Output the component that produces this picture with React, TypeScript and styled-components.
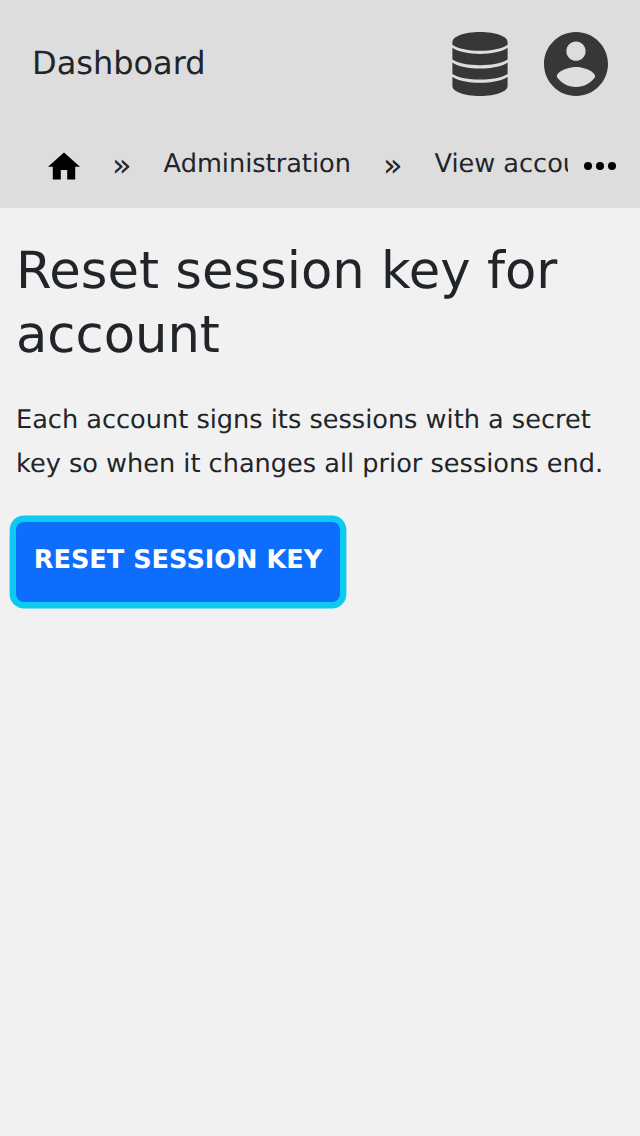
import React from 'react';
import styled, { createGlobalStyle } from 'styled-components';

const GlobalStyle = createGlobalStyle`
  * { box-sizing: border-box; }
  body {
    margin: 0;
    background: #f1f1f1;
    color: #212529;
    font-family: "DejaVu Sans", sans-serif;
    text-rendering: geometricPrecision;
  }
`;

const Page = styled.div`
  min-height: 1136px;
`;

const Header = styled.header`
  height: 208px;
  background: #ddd;
`;

const TopBar = styled.div`
  display: flex;
  align-items: center;
  height: 128px;
  padding: 0 32px;
`;

const Brand = styled.a`
  flex: 1;
  padding-bottom: 2px;
  font-size: 32px;
  line-height: 48px;
`;

const Actions = styled.div`
  display: flex;
  gap: 32px;
`;

const IconButton = styled.button`
  width: 64px;
  height: 64px;
  padding: 0;
  border: 0;
  background: none;
  color: #373737;
  svg { display: block; }
`;

const Crumbs = styled.nav`
  display: flex;
  height: 80px;
  padding-left: 48px;
`;

const CrumbList = styled.div`
  display: flex;
  width: 520px;
  overflow: hidden;
  white-space: nowrap;
`;

const Crumb = styled.span`
  font-size: 25.6px;
  line-height: 40px;
  padding-top: 16px;
  flex: none;
`;

const Separator = styled.span`
  flex: none;
  width: 83.6px;
  padding-top: 17px;
  text-align: center;
  font-size: 32px;
  line-height: 40px;
`;

const HomeIcon = styled.svg`
  flex: none;
  width: 32px;
  height: 28px;
  margin-top: 24px;
`;

const MoreIcon = styled.svg`
  flex: none;
  width: 32px;
  height: 8px;
  margin: 34px 0 0 16px;
`;

const Content = styled.main`
  padding: 31px 16px;
`;

const Title = styled.h1`
  margin: 0;
  font-size: 51.2px;
  font-weight: 400;
  line-height: 64px;
`;

const Description = styled.p`
  margin: 31px 0 36px;
  font-size: 25.6px;
  line-height: 44px;
`;

const PrimaryButton = styled.button`
  height: 80px;
  width: 324px;
  padding: 0 0 4px;
  border: 0;
  border-radius: 8px;
  background: #0d6efd;
  box-shadow: 0 0 0 6.4px #0dcaf0;
  color: #fff;
  font: 700 25.6px "DejaVu Sans", sans-serif;
  text-rendering: geometricPrecision;
  white-space: nowrap;
`;

export default function App() {
  return (
    <Page>
      <GlobalStyle />
      <Header>
        <TopBar>
          <Brand>Dashboard</Brand>
          <Actions>
            <IconButton aria-label="Data">
              <svg width="64" height="64" viewBox="0 0 64 64" fill="currentColor">
                <path d="M4.4 10C4.4 4.5 16 0 32 0S59.6 4.5 59.6 10V12.8C54 16.8 43 18.8 32 18.8S10 16.8 4.4 12.8Z" />
                <path d="M4.4 15.8C10 19.9 21 21.9 32 21.9S54 19.9 59.6 15.8V27.5C54 31.3 43 33.2 32 33.2S10 31.3 4.4 27.5Z" />
                <path d="M4.4 30.4C10 34.4 21 36.4 32 36.4S54 34.4 59.6 30.4V42C54 45.8 43 47.6 32 47.6S10 45.8 4.4 42Z" />
                <path d="M4.4 45C10 48.9 21 50.8 32 50.8S54 48.9 59.6 45V54C59.6 59.5 48 64 32 64S4.4 59.5 4.4 54Z" />
              </svg>
            </IconButton>
            <IconButton aria-label="Account">
              <svg width="64" height="64" viewBox="2 2 20 20" fill="currentColor">
                <path d="M12 2C6.48 2 2 6.48 2 12s4.48 10 10 10 10-4.48 10-10S17.52 2 12 2zm0 3c1.66 0 3 1.34 3 3s-1.34 3-3 3-3-1.34-3-3 1.34-3 3-3zm0 14.2c-2.5 0-4.71-1.28-6-3.22.03-1.99 4-3.08 6-3.08 1.99 0 5.97 1.09 6 3.08-1.29 1.94-3.5 3.22-6 3.22z" />
              </svg>
            </IconButton>
          </Actions>
        </TopBar>
        <Crumbs>
          <CrumbList>
            <HomeIcon viewBox="2 3 20 17"><path d="M10 20v-6h4v6h5v-8h3L12 3 2 12h3v8z" /></HomeIcon>
            <Separator>»</Separator>
            <Crumb>Administration</Crumb>
            <Separator>»</Separator>
            <Crumb>View account</Crumb>
          </CrumbList>
          <MoreIcon viewBox="0 0 32 8"><circle cx="4" cy="4" r="4" /><circle cx="16" cy="4" r="4" /><circle cx="28" cy="4" r="4" /></MoreIcon>
        </Crumbs>
      </Header>
      <Content>
        <Title>Reset session key for account</Title>
        <Description>Each account signs its sessions with a secret key so when it changes all prior sessions end.</Description>
        <PrimaryButton>RESET SESSION KEY</PrimaryButton>
      </Content>
    </Page>
  );
}
